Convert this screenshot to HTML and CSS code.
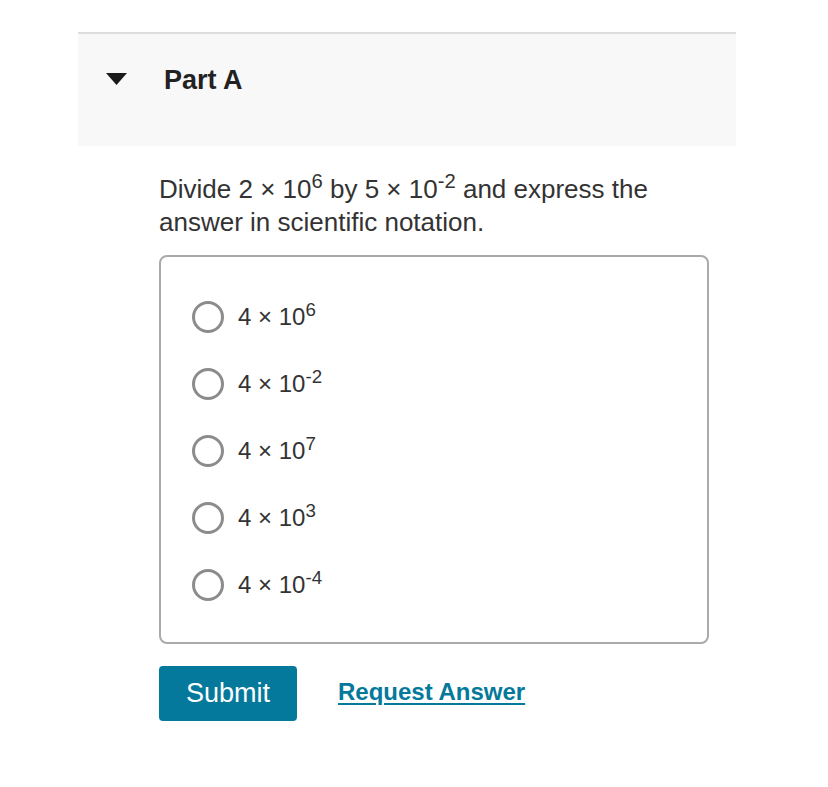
FILE: index.html
```html
<!DOCTYPE html>
<html lang="en">
<head>
    <meta charset="UTF-8">
    <meta name="viewport" content="width=device-width, initial-scale=1.0">
    <title>Part A</title>
    <link rel="stylesheet" href="styles.css">
</head>
<body>
    <div class="part">
        <div class="part-header">
            <svg class="caret" width="21" height="12" viewBox="0 0 21 12">
                <path d="M0 0 H21 L10.5 12 Z" fill="#1a1a1a"/>
            </svg>
            <h2 class="part-title">Part A</h2>
        </div>
        <div class="part-body">
            <p class="question">Divide 2 &times; 10<sup>6</sup> by 5 &times; 10<sup>-2</sup> and express the answer in scientific notation.</p>
            <div class="choices">
                <label class="choice"><span class="radio"></span><span>4 &times; 10<sup>6</sup></span></label>
                <label class="choice"><span class="radio"></span><span>4 &times; 10<sup>-2</sup></span></label>
                <label class="choice"><span class="radio"></span><span>4 &times; 10<sup>7</sup></span></label>
                <label class="choice"><span class="radio"></span><span>4 &times; 10<sup>3</sup></span></label>
                <label class="choice"><span class="radio"></span><span>4 &times; 10<sup>-4</sup></span></label>
            </div>
            <div class="actions">
                <button class="submit">Submit</button>
                <a class="request" href="#">Request Answer</a>
            </div>
        </div>
    </div>
</body>
</html>
```

FILE: styles.css
```css
* {
    box-sizing: border-box;
    margin: 0;
    padding: 0;
}
body {
    font-family: "Liberation Sans", Arial, sans-serif;
    color: #333333;
    background: #ffffff;
}
.part {
    width: 658px;
    margin: 32px 0 0 78px;
}
.part-header {
    display: flex;
    align-items: flex-start;
    height: 114px;
    padding: 30px 0 0 28px;
    border-top: 2px solid #dddddd;
    background-color: #f8f8f8;
}
.caret {
    margin: 9px 37px 0 0;
}
.part-title {
    font-size: 27px;
    line-height: 32px;
    font-weight: bold;
    color: #222222;
}

/* body */
.part-body {
    padding: 27px 0 0 81px;
}
.question {
    width: 520px;
    font-size: 26px;
    line-height: 33px;
}
sup {
    font-size: 0.78em;
    line-height: 0;
    vertical-align: 0.5em;
}
.choices {
    width: 550px;
    margin-top: 16px;
    padding: 26px 0 24px 31px;
    border: 2px solid #aaaaaa;
    border-radius: 8px;
}
.choice {
    display: flex;
    align-items: center;
    height: 67px;
    font-size: 24px;
    cursor: pointer;
}
.radio {
    width: 32px;
    height: 32px;
    margin-right: 14px;
    border: 3px solid #8c8c8c;
    border-radius: 50%;
    background: #fff;
}
.actions {
    display: flex;
    align-items: center;
    margin-top: 22px;
}
.submit {
    width: 138px;
    height: 55px;
    border: none;
    border-radius: 4px;
    background-color: #04799b;
    color: #ffffff;
    font-family: inherit;
    font-size: 27px;
    cursor: pointer;
}
.request {
    margin-left: 41px;
    margin-top: -3px;
    font-size: 24px;
    font-weight: bold;
    color: #04799b;
    text-decoration: underline;
    text-underline-offset: 3px;
}
```
